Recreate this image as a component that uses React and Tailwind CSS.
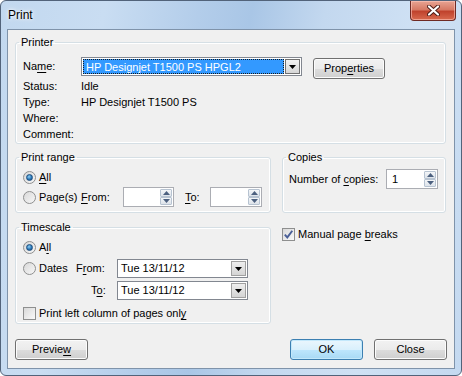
import React from "react";

const U = ({ children }) => <span className="underline underline-offset-[2px] decoration-[1px]">{children}</span>;

const Radio = ({ checked }) => (
  <span className="w-[13px] h-[13px] shrink-0 rounded-full border border-[#8e8f8f] bg-[linear-gradient(135deg,#d8d8d8,#f7f7f7)] flex items-center justify-center">
    {checked && (
      <span className="w-[7px] h-[7px] rounded-full border border-[#1c4f80] bg-[radial-gradient(circle_at_40%_35%,#8fd0f5,#2b78b8_55%,#17457a)]" />
    )}
  </span>
);

const Check = ({ checked }) => (
  <span className="w-[13px] h-[13px] shrink-0 border border-[#8e8f8f] bg-[linear-gradient(135deg,#d9d9d9,#fafafa)] flex items-center justify-center">
    {checked && (
      <svg width="11" height="11" viewBox="0 0 11 11">
        <path d="M1.8 5.6 L4.3 8.4 L9.3 1.8" stroke="#4a5f97" strokeWidth="1.9" fill="none" />
      </svg>
    )}
  </span>
);

const Tri = ({ up }) => (
  <svg width="7" height="4" viewBox="0 0 7 4">
    <path d={up ? "M0 4 L3.5 0 L7 4 Z" : "M0 0 L7 0 L3.5 4 Z"} fill="#4c607f" />
  </svg>
);

const SpinBox = ({ value = "", w }) => (
  <div className={`flex h-[20px] ${w} border border-[#abadb3] bg-white`}>
    <div className="flex-1 pl-[5px] leading-[18px]">{value}</div>
    <div className="flex flex-col w-[14px] p-[1px]">
      <div className="flex-1 flex items-center justify-center border border-[#b7c3d1] rounded-[1px] bg-[linear-gradient(#f4f6f8,#dde3ea)]">
        <Tri up />
      </div>
      <div className="flex-1 flex items-center justify-center border border-[#b7c3d1] rounded-[1px] bg-[linear-gradient(#f4f6f8,#dde3ea)]">
        <Tri />
      </div>
    </div>
  </div>
);

const Arrow = () => (
  <svg width="7" height="4" viewBox="0 0 7 4">
    <path d="M0 0 L7 0 L3.5 4 Z" fill="#000" />
  </svg>
);

const DateCombo = ({ value }) => (
  <div className="flex h-[19px] w-[131px] border border-[#828790] bg-white">
    <div className="flex-1 pl-[3px] leading-[17px]">{value}</div>
    <div className="w-[15px] m-[1px] flex items-center justify-center border border-[#a0a0a0] bg-[linear-gradient(#eeeeee,#d4d4d4)]">
      <Arrow />
    </div>
  </div>
);

const Btn = ({ children, w = "w-[73px]", def }) => (
  <button
    className={`${w} h-[21px] rounded-[3px] border text-[11px] leading-[19px] text-black ${
      def
        ? "border-[#3c7fb1] bg-[linear-gradient(#eaf6fd_0%,#d9f0fc_50%,#bee6fd_51%,#a7d9f5_100%)] shadow-[inset_0_0_0_1px_#c3e8fb]"
        : "border-[#707070] bg-[linear-gradient(#f2f2f2_0%,#ebebeb_50%,#dddddd_51%,#cfcfcf_100%)] shadow-[inset_0_0_0_1px_#fcfcfc]"
    }`}
  >
    {children}
  </button>
);

const Group = ({ title, className = "", children }) => (
  <fieldset className={`border border-[#d5dfe5] rounded-[3px] shadow-[inset_0_0_0_1px_#ffffff] ${className}`}>
    <legend className="ml-[3px] px-[2px] leading-[13px]">{title}</legend>
    {children}
  </fieldset>
);

export default function App() {
  return (
    <div className="w-[462px] h-[376px] overflow-hidden bg-white">
      <div className="w-[462px] h-[376px] rounded-[6px] border border-[#52637a] bg-[linear-gradient(100deg,#c2d8ef_0%,#c9ddf2_20%,#b3cdea_38%,#a9c6e6_48%,#c3d8ef_62%,#cfe1f4_80%,#c4d9f0_100%)] flex flex-col font-['Liberation_Sans',Arial,sans-serif] text-[11px] text-black">
        {/* title bar */}
        <div className="h-[28px] flex items-start justify-between">
          <div className="pl-[7px] pt-[7px] text-[12px] leading-[15px] text-black [text-shadow:0_0_6px_#ffffff,0_0_3px_#ffffff]">
            Print
          </div>
          <div className="mr-[5px] w-[46px] h-[20px] rounded-b-[4px] border border-t-0 border-[#6e2a24] bg-[linear-gradient(#e8a493_0%,#d77a65_45%,#c0432d_55%,#d86a4f_100%)] shadow-[inset_0_0_0_1px_rgba(255,200,190,0.6)] flex items-center justify-center">
            <svg width="13" height="11" viewBox="0 0 13 11">
              <path d="M2 1.5 L11 9.5 M11 1.5 L2 9.5" stroke="#4a1a14" strokeWidth="4" strokeLinecap="round" />
              <path d="M2 1.5 L11 9.5 M11 1.5 L2 9.5" stroke="#ffffff" strokeWidth="2.2" strokeLinecap="round" />
            </svg>
          </div>
        </div>

        {/* client area */}
        <div className="ml-[6px] w-[448px] h-[340px] border border-[#7f93aa] bg-[#f0f0f0] flex flex-col pl-[7px] pr-[8px]">
          {/* Printer */}
          <Group title="Printer" className="mt-[6px] h-[108px] w-[431px]">
            <div className="pl-[7px] pt-[8px] flex flex-col">
              <div className="flex items-start h-[21px]">
                <div className="w-[58px] leading-[19px]">
                  Na<U>m</U>e:
                </div>
                <div className="flex h-[19px] w-[221px] border border-[#828790] bg-white">
                  <div className="flex-1 m-[1px] bg-[#3399ff] text-white leading-[15px] pl-[2px] border border-dotted border-[#1a1a1a]">
                    HP Designjet T1500 PS HPGL2
                  </div>
                  <div className="w-[15px] m-[1px] ml-0 flex items-center justify-center border border-[#707070] bg-[linear-gradient(#f2f2f2,#d6d6d6)]">
                    <Arrow />
                  </div>
                </div>
                <div className="ml-[11px] mt-[1px]">
                  <Btn w="w-[72px]">
                    Prop<U>e</U>rties
                  </Btn>
                </div>
              </div>
              {[
                ["Status:", "Idle"],
                ["Type:", "HP Designjet T1500 PS"],
                ["Where:", ""],
                ["Comment:", ""],
              ].map(([k, v]) => (
                <div key={k} className="flex h-[16px] leading-[16px]">
                  <div className="w-[58px]">{k}</div>
                  <div>{v}</div>
                </div>
              ))}
            </div>
          </Group>

          {/* Print range + Copies */}
          <div className="mt-[7px] flex gap-[11px]">
            <Group title="Print range" className="h-[62px] w-[256px]">
              <div className="pl-[7px] pt-[5px] flex flex-col">
                <div className="flex items-center h-[16px] gap-[3px]">
                  <Radio checked />
                  <span>
                    <U>A</U>ll
                  </span>
                </div>
                <div className="mt-[2px] flex items-center h-[20px]">
                  <div className="w-[58px] flex items-center gap-[3px]">
                    <Radio />
                    <span>Page(s)</span>
                  </div>
                  <div className="w-[42px]">
                    <U>F</U>rom:
                  </div>
                  <SpinBox w="w-[51px]" />
                  <div className="ml-[11px] w-[25px]">
                    <U>T</U>o:
                  </div>
                  <SpinBox w="w-[52px]" />
                </div>
              </div>
            </Group>
            <Group title="Copies" className="h-[62px] w-[164px]">
              <div className="pl-[6px] pt-[5px] flex items-center h-[25px]">
                <div className="w-[97px]">
                  Number of <U>c</U>opies:
                </div>
                <SpinBox value="1" w="w-[52px]" />
              </div>
            </Group>
          </div>

          {/* Timescale + manual page breaks */}
          <div className="mt-[8px] flex gap-[11px]">
            <Group title="Timescale" className="h-[103px] w-[256px]">
              <div className="pl-[7px] pt-[5px] flex flex-col">
                <div className="flex items-center h-[16px] gap-[3px]">
                  <Radio checked />
                  <span>
                    A<U>l</U>l
                  </span>
                </div>
                <div className="mt-[4px] flex items-center h-[19px]">
                  <div className="w-[53px] flex items-center gap-[3px]">
                    <Radio />
                    <span>Dates</span>
                  </div>
                  <div className="w-[41px]">
                    F<U>r</U>om:
                  </div>
                  <DateCombo value="Tue 13/11/12" />
                </div>
                <div className="mt-[3px] flex items-center h-[19px]">
                  <div className="w-[68px]" />
                  <div className="w-[26px]">
                    T<U>o</U>:
                  </div>
                  <DateCombo value="Tue 13/11/12" />
                </div>
                <div className="mt-[7px] flex items-center h-[13px] gap-[3px]">
                  <Check />
                  <span>
                    Print left column of pages onl<U>y</U>
                  </span>
                </div>
              </div>
            </Group>
            <div className="pt-[7px] flex items-start">
              <div className="flex items-center gap-[3px] h-[13px]">
                <Check checked />
                <span>
                  Manual page <U>b</U>reaks
                </span>
              </div>
            </div>
          </div>

          {/* buttons */}
          <div className="mt-[15px] flex">
            <Btn>
              Previe<U>w</U>
            </Btn>
            <div className="flex-1" />
            <Btn def>OK</Btn>
            <div className="ml-[11px] mr-[-1px]">
              <Btn>Close</Btn>
            </div>
          </div>
        </div>
      </div>
    </div>
  );
}
